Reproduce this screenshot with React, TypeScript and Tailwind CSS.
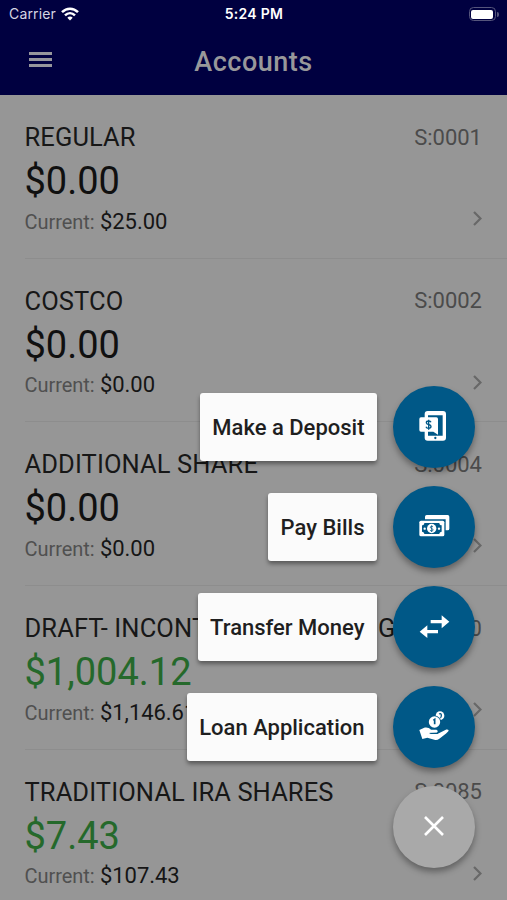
import type { ReactNode } from "react"

const accounts = [
  { name: "REGULAR", code: "S:0001", available: "$0.00", current: "$25.00" },
  { name: "COSTCO", code: "S:0002", available: "$0.00", current: "$0.00" },
  { name: "ADDITIONAL SHARE", code: "S:0004", available: "$0.00", current: "$0.00" },
  { name: "DRAFT- INCONTINUE CHECKING", code: "S:0070", available: "$1,004.12", current: "$1,146.61" },
  { name: "TRADITIONAL IRA SHARES", code: "S:0085", available: "$7.43", current: "$107.43" },
]

function ActionIcon({ children }: { children: ReactNode }) {
  return (
    <svg viewBox="84 92 96 96" className="size-8" fill="white">
      {children}
    </svg>
  )
}

function DepositIcon() {
  return (
    <ActionIcon>
      <path
        fillRule="evenodd"
        d="M113 92h46a9 9 0 0 1 9 9v71a9 9 0 0 1-9 9h-46a9 9 0 0 1-9-9v-71a9 9 0 0 1 9-9zm1 13v61h44v-61z"
      />
      <path d="M93 111h46a5 5 0 0 1 5 5v47l-14-9H93a5 5 0 0 1-5-5v-33a5 5 0 0 1 5-5z" />
      <circle cx="136" cy="173" r="3.5" fill="#005887" />
      <path
        d="M123 126c-1-3-4-4-7-4-4 0-7 2-7 5 0 7 14 4 14 11 0 4-3 6-7 6s-7-2-8-5M116 118v30"
        fill="none"
        stroke="#005887"
        strokeWidth="4"
      />
    </ActionIcon>
  )
}

function BillsIcon() {
  return (
    <ActionIcon>
      <path d="M110 104h63a5 5 0 0 1 5 5v36a5 5 0 0 1-5 5h-6v-33h-62v-8a5 5 0 0 1 5-5z" />
      <rect x="88" y="121" width="75" height="47" rx="5" />
      <path d="M103 128h45c0 4 3 7 7 7v19c-4 0-7 3-7 7h-45c0-4-3-7-7-7v-19c4 0 7-3 7-7z" fill="#005887" />
      <circle cx="125" cy="144.5" r="14" />
      <circle cx="104" cy="145" r="3.5" />
      <circle cx="147" cy="145" r="3.5" />
      <path
        d="M129 140c-1-2-2-2-4-2-3 0-4 1-4 3 0 4 8 3 8 7 0 3-2 4-4 4s-4-1-5-3M125 135v20"
        fill="none"
        stroke="#005887"
        strokeWidth="2.5"
      />
    </ActionIcon>
  )
}

function TransferIcon() {
  return (
    <ActionIcon>
      <path d="M122 119h33v-14l23 19-23 20v-15h-33z" />
      <path d="M144 149h-32v-14l-23 19 23 19v-14h32z" />
    </ActionIcon>
  )
}

function LoanIcon() {
  return (
    <ActionIcon>
      <circle cx="150" cy="106" r="13" />
      <path d="M147 101q7-3 7 4t-3 8" fill="none" stroke="#005887" strokeWidth="4" />
      <circle cx="133.5" cy="125" r="19.5" fill="#005887" />
      <circle cx="133.5" cy="125" r="17" />
      <path d="M130 120l4-3v15" fill="none" stroke="#005887" strokeWidth="5" />
      <path d="M88 149l13-6c8-3 16-1 22 5h14c7 0 8 7 3 9l-18 1 1 3h19l24-12c7-3 12 0 9 4-9 9-18 16-27 22-5 4-10 5-15 3l-21-6-15 4z" />
      <path d="M119 159h20c5 0 8-3 7-7" fill="none" stroke="#005887" strokeWidth="3" />
    </ActionIcon>
  )
}

const actions = [
  { label: "Make a Deposit", icon: <DepositIcon /> },
  { label: "Pay Bills", icon: <BillsIcon /> },
  { label: "Transfer Money", icon: <TransferIcon /> },
  { label: "Loan Application", icon: <LoanIcon /> },
]

function StatusBar() {
  return (
    <div className="grid h-7 grid-cols-3 items-center pl-[9px] pr-2 font-[Inter,sans-serif] text-white">
      <div className="flex items-center gap-[5px] text-[14px] leading-7 text-[#d5d5e2]">
        <span className="tracking-[0.15px]">Carrier</span>
        <svg viewBox="0 0 18 14" className="h-[14px] w-[18px]" fill="none" stroke="white" strokeWidth="2.5">
          <path d="M1 5.2c4.7-4.700 11.300-4.700 16 0" />
          <path d="M4 8.400c3-2.900 7-2.900 10 0" />
          <path d="M6.300 10.700c1.600-1.500 3.800-1.500 5.400 0L9 13.500z" fill="white" stroke="none" />
        </svg>
      </div>
      <div className="text-center text-[14px] font-semibold leading-7 tracking-[0.3px]">5:24 PM</div>
      <div className="flex items-center justify-end gap-px">
        <div className="h-[14px] w-[27px] rounded-[4.5px] border border-[#55557c] p-[1.5px]">
          <div className="h-full rounded-[2px] bg-white" />
        </div>
        <div className="h-[5px] w-[2px] rounded-r bg-[#55557c]" />
      </div>
    </div>
  )
}

export default function App() {
  return (
    <div className="relative h-[900px] w-[507px] overflow-hidden bg-[#969696] font-[Roboto,sans-serif]">
      {/* Header */}
      <header className="h-[95px] bg-[#000040]">
        <StatusBar />
        <div className="grid h-[67px] grid-cols-[80px_1fr_80px] items-center">
          <div className="-mt-1 ml-[29px] flex w-[23px] flex-col gap-[3.5px]">
            <span className="h-[2.5px] bg-[#96969c]" />
            <span className="h-[2.5px] bg-[#96969c]" />
            <span className="h-[2.5px] bg-[#96969c]" />
          </div>
          <h1 className="pt-0.5 text-center text-[27px] font-medium tracking-[0.5px] text-[#98989a]">Accounts</h1>
        </div>
      </header>

      {/* Accounts */}
      <main>
        {accounts.map((account) => (
          <section key={account.code} className="ml-[24.5px] flex h-[163.7px] flex-col border-b border-[#8d8d8d] pr-[25px] pt-[25px]">
            <div className="flex h-[34px] items-center justify-between whitespace-nowrap">
              <h2 className="text-[25.5px] tracking-[0.1px] text-[#171717]">{account.name}</h2>
              <span className="text-[22px] text-[#4b4b4b]">{account.code}</span>
            </div>
            <div
              className={
                account.available === "$0.00"
                  ? "h-[52px] text-[38px] leading-[54px] text-[#101010]"
                  : "h-[52px] text-[38px] leading-[54px] text-[#25692b]"
              }
            >
              {account.available}
            </div>
            <div className="flex h-[30px] items-center justify-between">
              <p className="text-[22px] tracking-[-0.05px] text-[#151515]">
                <span className="text-[20px] text-[#505050]">Current:</span> {account.current}
              </p>
              <svg viewBox="0 0 9 15" className="mb-[5px] h-[15px] w-[9px]" fill="none" stroke="#686868" strokeWidth="2.2">
                <path d="M1 1l6.500 6.500L1 14" />
              </svg>
            </div>
          </section>
        ))}
      </main>

      {/* Quick actions */}
      <div className="absolute right-8 top-[386px] flex flex-col items-end gap-[18px]">
        {actions.map((action) => (
          <div key={action.label} className="flex items-center gap-4">
            <span className="flex h-[68px] items-center whitespace-nowrap rounded-[3px] bg-[#fbfbfb] px-[12.5px] text-[22px] font-medium text-[#1f1f1f] shadow-[0_3px_4px_rgba(0,0,0,0.4)]">
              {action.label}
            </span>
            <button className="flex size-[82px] items-center justify-center rounded-full bg-[#005887] shadow-[0_4px_6px_rgba(0,0,0,0.35)]">
              {action.icon}
            </button>
          </div>
        ))}
        <button className="flex size-[82px] items-center justify-center rounded-full bg-[#a9a9a9] shadow-[0_4px_6px_rgba(0,0,0,0.35)]">
          <svg viewBox="0 0 20 20" className="-mt-0.5 size-5" fill="none" stroke="white" strokeWidth="2.6">
            <path d="M1 1l18 18M19 1L1 19" />
          </svg>
        </button>
      </div>
    </div>
  )
}
